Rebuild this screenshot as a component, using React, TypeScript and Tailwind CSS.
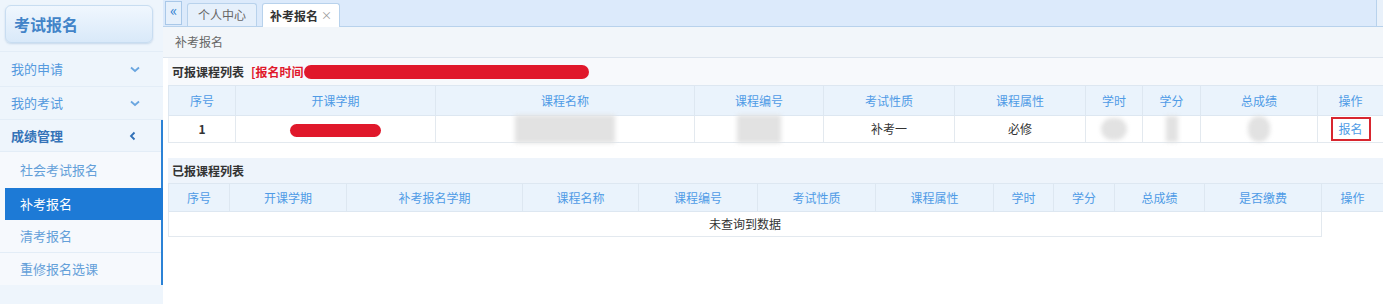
const font = { fontFamily: '"Noto Sans CJK SC", "Noto Sans", sans-serif' };

const t1Cols = [67, 200, 259, 129, 131, 131, 57, 58, 117, 66];
const t1Heads = ["序号", "开课学期", "课程名称", "课程编号", "考试性质", "课程属性", "学时", "学分", "总成绩", "操作"];

const t2Cols = [61, 117, 176, 116, 119, 118, 118, 60, 61, 90, 117, 62];
const t2Heads = ["序号", "开课学期", "补考报名学期", "课程名称", "课程编号", "考试性质", "课程属性", "学时", "学分", "总成绩", "是否缴费", "操作"];

const Blur = ({ w, h, round = false }: { w: number; h: number; round?: boolean }) => (
  <span
    className={`inline-block bg-[#e2e2e2] blur-[2px] ${round ? "rounded-full" : ""}`}
    style={{ width: w, height: h }}
  />
);

const Chev = ({ down = false }: { down?: boolean }) => (
  <svg width="12" height="12" viewBox="0 0 12 12" fill="none" stroke={down ? "#6aa6e0" : "#2f6fb6"} strokeWidth="1.8">
    {down ? <path d="M2 4.5l4 3.5 4-3.5" /> : <path d="M7.5 2.5L4 6l3.5 3.5" />}
  </svg>
);

const Sidebar = () => (
  <div className="w-[163px] shrink-0 h-[304px] bg-[#eef5fc] flex flex-col text-[13px]">
    <div className="h-[52px] px-[5px] pt-[5px] border-b border-[#e3edf7]">
      <div className="h-[38px] w-[148px] rounded-md border border-[#c8ddf1] bg-gradient-to-b from-[#f0f7fe] to-[#d9e9f9] shadow-[0_1px_2px_rgba(120,160,200,0.35)] flex items-center pl-[8px] text-[16px] font-bold text-[#4284c8]">
        考试报名
      </div>
    </div>
    <div className="h-[35px] flex items-center justify-between pl-[11px] pr-[22px] border-b border-[#e3edf7] text-[#559ade]">
      <span>我的申请</span>
      <Chev down />
    </div>
    <div className="h-[33px] flex items-center justify-between pl-[11px] pr-[22px] border-b border-[#e3edf7] text-[#559ade]">
      <span>我的考试</span>
      <Chev down />
    </div>
    <div className="border-r-2 border-[#2b82d6] flex flex-col">
      <div className="h-[32px] flex items-center justify-between pl-[11px] pr-[22px] border-b border-[#e3edf7] font-bold text-[#3573b8]">
        <span>成绩管理</span>
        <Chev />
      </div>
      <div className="bg-[#f6f9fd] flex flex-col text-[#64a0d9]">
        <div className="h-[36px] flex items-center pl-[20px]">社会考试报名</div>
        <div className="h-[32px] flex items-center pl-[15px] ml-[5px] -mr-[2px] bg-[#1d7ad6] text-white">补考报名</div>
        <div className="h-[33px] flex items-center pl-[20px] border-b border-[#e3edf7]">清考报名</div>
        <div className="h-[32px] flex items-center pl-[20px]">重修报名选课</div>
      </div>
    </div>
  </div>
);

export default function App() {
  return (
    <div className="w-[1383px] h-[304px] flex bg-white overflow-hidden" style={font}>
      <Sidebar />
      <div className="flex-1 flex flex-col min-w-0">
        <div className="h-[27px] bg-[#dceafb] border-b border-[#b8d2ec] flex items-end gap-[5px] pl-[2px] relative">
          <div className="w-[17px] h-[24px] mb-[1px] border border-[#a9c8e8] bg-[#e6f0fb] flex items-start justify-center text-[#2f7fd0] text-[15px] leading-[16px]">«</div>
          <div className="w-[70px] h-[23px] rounded-t-[3px] border border-b-0 border-[#b8d2ec] bg-[#e6f0fb] flex items-center justify-center text-[12px] text-[#666]">个人中心</div>
          <div className="w-[78px] h-[24px] -mb-px rounded-t-[3px] border border-b-0 border-[#b8d2ec] bg-white flex items-center justify-center gap-[3px] text-[12px] font-bold text-[#333]">
            补考报名<span className="font-normal text-[11px] text-[#999]">×</span>
          </div>
          <div className="absolute right-0 top-0 w-[7px] h-[26px] border-l border-[#b8d2ec] bg-[#e9f1fa]" />
        </div>
        <div className="h-[31px] bg-[#f2f6fa] border-b border-[#dde5ee] flex items-center pl-[12px] text-[12px] text-[#666]">补考报名</div>
        <div className="pl-[5px]">
          <div className="h-[27px] bg-[#f7f9fc] flex items-center pl-[4px] text-[12px] font-bold text-[#333]">
            可报课程列表
            <span className="ml-[7px] text-[#e0182b]">[报名时间</span>
            <span className="w-[285px] h-[14px] rounded-full bg-[#e0182b]" />
          </div>
          <table className="table-fixed border-collapse text-[12px]" style={{ width: 1215 }}>
            <colgroup>
              {t1Cols.map((w, i) => <col key={i} style={{ width: w }} />)}
            </colgroup>
            <thead>
              <tr className="h-[30px] bg-[#eaf3fc]">
                {t1Heads.map((h) => (
                  <th key={h} className="font-normal text-[#4f9be6] border border-[#dde7f1]">{h}</th>
                ))}
              </tr>
            </thead>
            <tbody>
              <tr className="h-[25px] text-[#333] text-center">
                <td className="border border-[#e3e9ef] font-bold">1</td>
                <td className="border border-[#e3e9ef]"><span className="inline-block w-[91px] h-[13px] rounded-full bg-[#e0182b] align-middle" /></td>
                <td className="border border-[#e3e9ef]"><span className="flex justify-center -my-[2px]"><Blur w={100} h={28} /></span></td>
                <td className="border border-[#e3e9ef]"><span className="flex justify-center -my-[2px]"><Blur w={44} h={28} /></span></td>
                <td className="border border-[#e3e9ef]">补考一</td>
                <td className="border border-[#e3e9ef]">必修</td>
                <td className="border border-[#e3e9ef]"><span className="flex justify-center"><Blur w={26} h={22} round /></span></td>
                <td className="border border-[#e3e9ef]"><span className="flex justify-center"><Blur w={12} h={26} /></span></td>
                <td className="border border-[#e3e9ef]"><span className="flex justify-center"><Blur w={22} h={26} round /></span></td>
                <td className="border border-[#e3e9ef]">
                  <span className="flex justify-center">
                    <span className="w-[40px] h-[24px] border-2 border-[#d8262f] flex items-center justify-center text-[#4f9be6]">报名</span>
                  </span>
                </td>
              </tr>
            </tbody>
          </table>
          <div className="h-[15px]" />
          <div className="h-[25px] bg-[#eef4fb] flex items-center pl-[4px] text-[12px] font-bold text-[#333]">已报课程列表</div>
          <table className="table-fixed border-collapse text-[12px]" style={{ width: 1215 }}>
            <colgroup>
              {t2Cols.map((w, i) => <col key={i} style={{ width: w }} />)}
            </colgroup>
            <thead>
              <tr className="h-[28px] bg-[#eaf3fc]">
                {t2Heads.map((h) => (
                  <th key={h} className="font-normal text-[#4f9be6] border border-[#dde7f1]">{h}</th>
                ))}
              </tr>
            </thead>
            <tbody>
              <tr className="h-[25px]">
                <td colSpan={11} className="border border-[#e3e9ef] text-center text-[#333]">未查询到数据</td>
                <td />
              </tr>
            </tbody>
          </table>
        </div>
      </div>
    </div>
  );
}
